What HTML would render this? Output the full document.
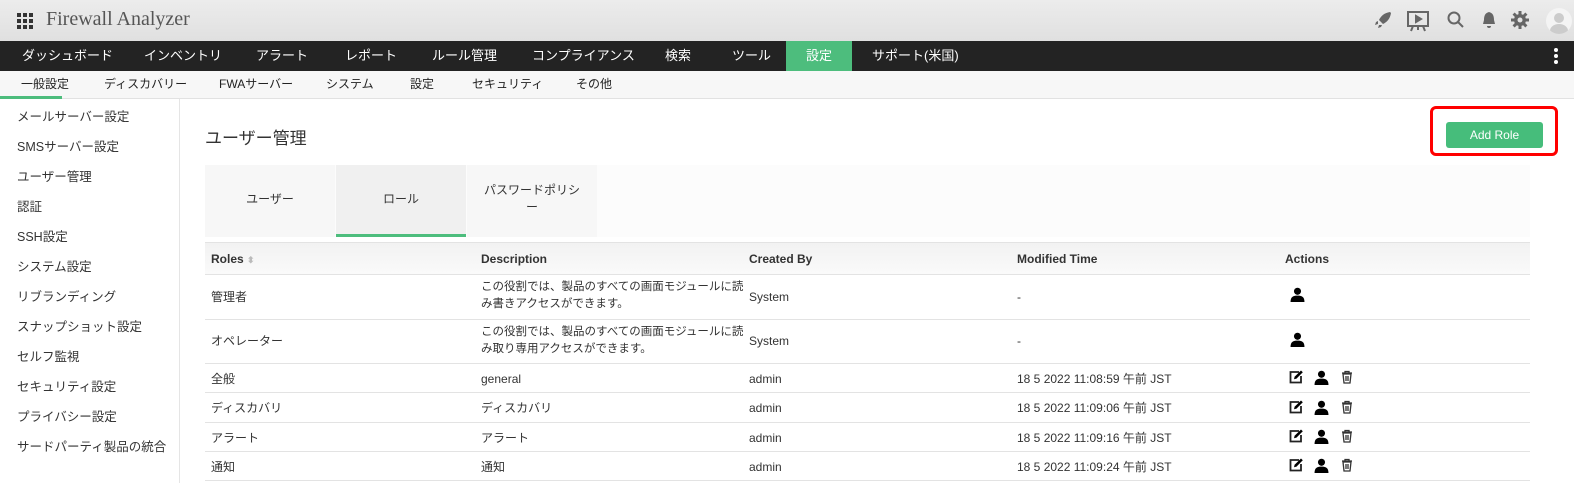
<!DOCTYPE html>
<html><head><meta charset="utf-8"><style>
*{margin:0;padding:0;box-sizing:border-box}
body{width:1574px;height:483px;overflow:hidden;background:#fff;font-family:"Liberation Sans","Noto Sans CJK JP",sans-serif;color:#333;position:relative}
.top{position:absolute;left:0;top:0;width:1574px;height:41px;background:linear-gradient(#ececec,#e0e0e0)}
.title{position:absolute;left:46px;top:8px;font-family:"Liberation Serif","Noto Serif CJK SC",serif;font-size:20px;color:#555}
.nav{position:absolute;left:0;top:41px;width:1574px;height:30px;background:#232323}
.nav span{position:absolute;top:0;line-height:30px;color:#fff;font-size:13px}
.sub{position:absolute;left:0;top:71px;width:1574px;height:28px;background:#f7f7f7;border-bottom:1px solid #e2e2e2}
.sub span{position:absolute;line-height:27px;font-size:12px;color:#222}
.side{position:absolute;left:0;top:99px;width:180px;height:384px;border-right:1px solid #e5e5e5}
.side div{position:absolute;left:17px;font-size:12.5px;color:#333}
.abs{position:absolute}
.row{position:absolute;left:205px;width:1325px;border-bottom:1px solid #e3e3e3}
.c{position:absolute;font-size:12px;color:#333;line-height:16px;height:16px;white-space:nowrap}
</style></head><body>
<div class="top">
 <svg class="abs" style="left:17px;top:13px" width="16" height="16" fill="#333"><g><rect x="0" y="0" width="4" height="4"/><rect x="6" y="0" width="4" height="4"/><rect x="12" y="0" width="4" height="4"/><rect x="0" y="6" width="4" height="4"/><rect x="6" y="6" width="4" height="4"/><rect x="12" y="6" width="4" height="4"/><rect x="0" y="12" width="4" height="4"/><rect x="6" y="12" width="4" height="4"/><rect x="12" y="12" width="4" height="4"/></g></svg>
 <div class="title">Firewall Analyzer</div>
 <svg class="abs" style="left:1373px;top:10px" width="20" height="20" fill="#666"><path d="M17 2 C11 3 8 6 6 10 L10 14 C14 12 17 9 18 3Z M5 11 L3 12 L2 15 L5 14Z M9 15 L8 17 L5 18 L6 15Z"/></svg>
 <svg class="abs" style="left:1406px;top:10px" width="24" height="22" fill="none" stroke="#666" stroke-width="2"><rect x="2" y="2" width="20" height="14"/><path d="M10 6 L15 9 L10 12Z" fill="#666"/><path d="M7 16 L5 21 M17 16 L19 21 M12 16 V20"/></svg>
 <svg class="abs" style="left:1447px;top:11px" width="18" height="18" fill="none" stroke="#666" stroke-width="2"><circle cx="7" cy="7" r="5.5"/><path d="M11 11 L16 16"/></svg>
 <svg class="abs" style="left:1481px;top:11px" width="16" height="18" fill="#666"><path d="M8 1 C4 2 3 5 3 9 L2 13 H14 L13 9 C13 5 12 2 8 1Z M6 15 H10 A2 2 0 0 1 6 15Z"/></svg>
 <svg class="abs" style="left:1511px;top:11px" width="18" height="18" fill="#666"><circle cx="9" cy="9" r="6"/><g stroke="#666" stroke-width="3"><path d="M9 0V18M0 9H18M2.6 2.6L15.4 15.4M15.4 2.6L2.6 15.4"/></g><circle cx="9" cy="9" r="2.5" fill="#e4e4e4"/></svg>
 <div class="abs" style="left:1546px;top:8px;width:26px;height:26px;border-radius:50%;background:#f4f4f4;overflow:hidden"><div class="abs" style="left:8px;top:5px;width:10px;height:10px;border-radius:50%;background:#ccc"></div><div class="abs" style="left:4px;top:16px;width:18px;height:14px;border-radius:50%;background:#ccc"></div></div>
</div>
<div class="nav">
 <span style="left:22px">ダッシュボード</span><span style="left:144px">インベントリ</span><span style="left:256px">アラート</span><span style="left:345px">レポート</span><span style="left:432px">ルール管理</span><span style="left:532px">コンプライアンス</span><span style="left:665px">検索</span><span style="left:732px">ツール</span>
 <span style="left:786px;width:66px;background:#4dbd7d;text-align:center">設定</span><span style="left:872px">サポート(米国)</span>
 <svg class="abs" style="left:1553px;top:6px" width="6" height="18" fill="#fff"><circle cx="3" cy="3" r="2"/><circle cx="3" cy="9" r="2"/><circle cx="3" cy="15" r="2"/></svg>
</div>
<div class="sub">
 <span style="left:21px">一般設定</span><span style="left:104px">ディスカバリー</span><span style="left:219px">FWAサーバー</span><span style="left:326px">システム</span><span style="left:410px">設定</span><span style="left:472px">セキュリティ</span><span style="left:576px">その他</span>
 <div class="abs" style="left:0;top:25px;width:62px;height:3px;background:#4dbd7d"></div>
</div>
<div class="side">
 <div style="top:7px">メールサーバー設定</div><div style="top:37px">SMSサーバー設定</div><div style="top:67px">ユーザー管理</div><div style="top:97px">認証</div><div style="top:127px">SSH設定</div><div style="top:157px">システム設定</div><div style="top:187px">リブランディング</div><div style="top:217px">スナップショット設定</div><div style="top:247px">セルフ監視</div><div style="top:277px">セキュリティ設定</div><div style="top:307px">プライバシー設定</div><div style="top:337px">サードパーティ製品の統合</div>
</div>
<div class="abs" style="left:205px;top:124px;font-size:17px;color:#333">ユーザー管理</div>
<div class="abs" style="left:1430px;top:106px;width:128px;height:50px;border:3px solid #f00;border-radius:6px"></div>
<div class="abs" style="left:1446px;top:122px;width:97px;height:26px;background:#46bd7b;border-radius:3px;color:#fff;font-size:12px;line-height:26px;text-align:center">Add Role</div>
<div class="abs" style="left:205px;top:165px;width:1325px;height:72px;background:#fcfcfc"></div>
<div class="abs" style="left:205px;top:165px;width:130px;height:72px;background:#f7f7f7;font-size:12px;text-align:center;line-height:68px">ユーザー</div>
<div class="abs" style="left:336px;top:165px;width:130px;height:72px;background:#f0f0f0;font-size:12px;text-align:center;line-height:68px;border-bottom:3px solid #4dbd7d">ロール</div>
<div class="abs" style="left:467px;top:165px;width:130px;height:72px;background:#f7f7f7;font-size:12px;text-align:center;padding-top:17px;line-height:17px">パスワードポリシ<br>ー</div>
<div class="row" style="top:242px;height:33px;background:linear-gradient(#f2f2f2,#fafafa);border-top:1px solid #e3e3e3">
 <div class="c" style="left:6px;top:8px;font-weight:bold">Roles <span style="color:#bbb;font-size:9px">⬍</span></div><div class="c" style="left:276px;top:8px;font-weight:bold">Description</div><div class="c" style="left:544px;top:8px;font-weight:bold">Created By</div><div class="c" style="left:812px;top:8px;font-weight:bold">Modified Time</div><div class="c" style="left:1080px;top:8px;font-weight:bold">Actions</div>
</div>
<div class="row" style="top:275px;height:45px">
 <div class="c" style="left:6px;top:14px">管理者</div><div class="c" style="left:276px;top:4px;line-height:17px;height:34px;font-size:11.5px">この役割では、製品のすべての画面モジュールに読<br>み書きアクセスができます。</div><div class="c" style="left:544px;top:14px">System</div><div class="c" style="left:812px;top:14px">-</div>
</div>
<div class="row" style="top:320px;height:44px">
 <div class="c" style="left:6px;top:13px">オペレーター</div><div class="c" style="left:276px;top:4px;line-height:17px;height:34px;font-size:11.5px">この役割では、製品のすべての画面モジュールに読<br>み取り専用アクセスができます。</div><div class="c" style="left:544px;top:13px">System</div><div class="c" style="left:812px;top:13px">-</div>
</div>
<div class="row" style="top:364px;height:29px"><div class="c" style="left:6px;top:7px">全般</div><div class="c" style="left:276px;top:7px">general</div><div class="c" style="left:544px;top:7px">admin</div><div class="c" style="left:812px;top:7px">18 5 2022 11:08:59 午前 JST</div></div>
<div class="row" style="top:393px;height:30px"><div class="c" style="left:6px;top:7px">ディスカバリ</div><div class="c" style="left:276px;top:7px">ディスカバリ</div><div class="c" style="left:544px;top:7px">admin</div><div class="c" style="left:812px;top:7px">18 5 2022 11:09:06 午前 JST</div></div>
<div class="row" style="top:423px;height:29px"><div class="c" style="left:6px;top:7px">アラート</div><div class="c" style="left:276px;top:7px">アラート</div><div class="c" style="left:544px;top:7px">admin</div><div class="c" style="left:812px;top:7px">18 5 2022 11:09:16 午前 JST</div></div>
<div class="row" style="top:452px;height:29px"><div class="c" style="left:6px;top:7px">通知</div><div class="c" style="left:276px;top:7px">通知</div><div class="c" style="left:544px;top:7px">admin</div><div class="c" style="left:812px;top:7px">18 5 2022 11:09:24 午前 JST</div></div>
<svg width="0" height="0" style="position:absolute"><defs>
<symbol id="u" viewBox="0 0 14 14"><circle cx="7" cy="4" r="3.3"/><path d="M0.5 14 C0.5 9 3 8 7 8 C11 8 13.5 9 13.5 14Z"/></symbol>
<symbol id="e" viewBox="0 0 14 14"><path d="M10 2 H1.5 V12.5 H12 V6" fill="none" stroke="#222" stroke-width="1.8"/><path d="M12 0.5 L13.8 2.3 L7.5 8.6 L5 9.2 L5.6 6.7Z"/></symbol>
<symbol id="t" viewBox="0 0 14 14"><path d="M2 3 H12 M5 3 V1.5 H9 V3 M3 4 L4 13 H10 L11 4Z M6 6 V11 M8 6 V11" fill="none" stroke="#333" stroke-width="1.3"/></symbol>
</defs></svg>
<svg class="abs" style="left:1290px;top:287px" width="15" height="15"><use href="#u"/></svg>
<svg class="abs" style="left:1290px;top:332px" width="15" height="15"><use href="#u"/></svg>
<svg class="abs" style="left:1289px;top:370px" width="42" height="15"><use href="#e" width="14" height="14"/><use href="#u" x="25" width="15" height="15"/></svg><svg class="abs" style="left:1340px;top:370px" width="14" height="14"><use href="#t"/></svg>
<svg class="abs" style="left:1289px;top:400px" width="42" height="15"><use href="#e" width="14" height="14"/><use href="#u" x="25" width="15" height="15"/></svg><svg class="abs" style="left:1340px;top:400px" width="14" height="14"><use href="#t"/></svg>
<svg class="abs" style="left:1289px;top:429px" width="42" height="15"><use href="#e" width="14" height="14"/><use href="#u" x="25" width="15" height="15"/></svg><svg class="abs" style="left:1340px;top:429px" width="14" height="14"><use href="#t"/></svg>
<svg class="abs" style="left:1289px;top:458px" width="42" height="15"><use href="#e" width="14" height="14"/><use href="#u" x="25" width="15" height="15"/></svg><svg class="abs" style="left:1340px;top:458px" width="14" height="14"><use href="#t"/></svg>
</body></html>
